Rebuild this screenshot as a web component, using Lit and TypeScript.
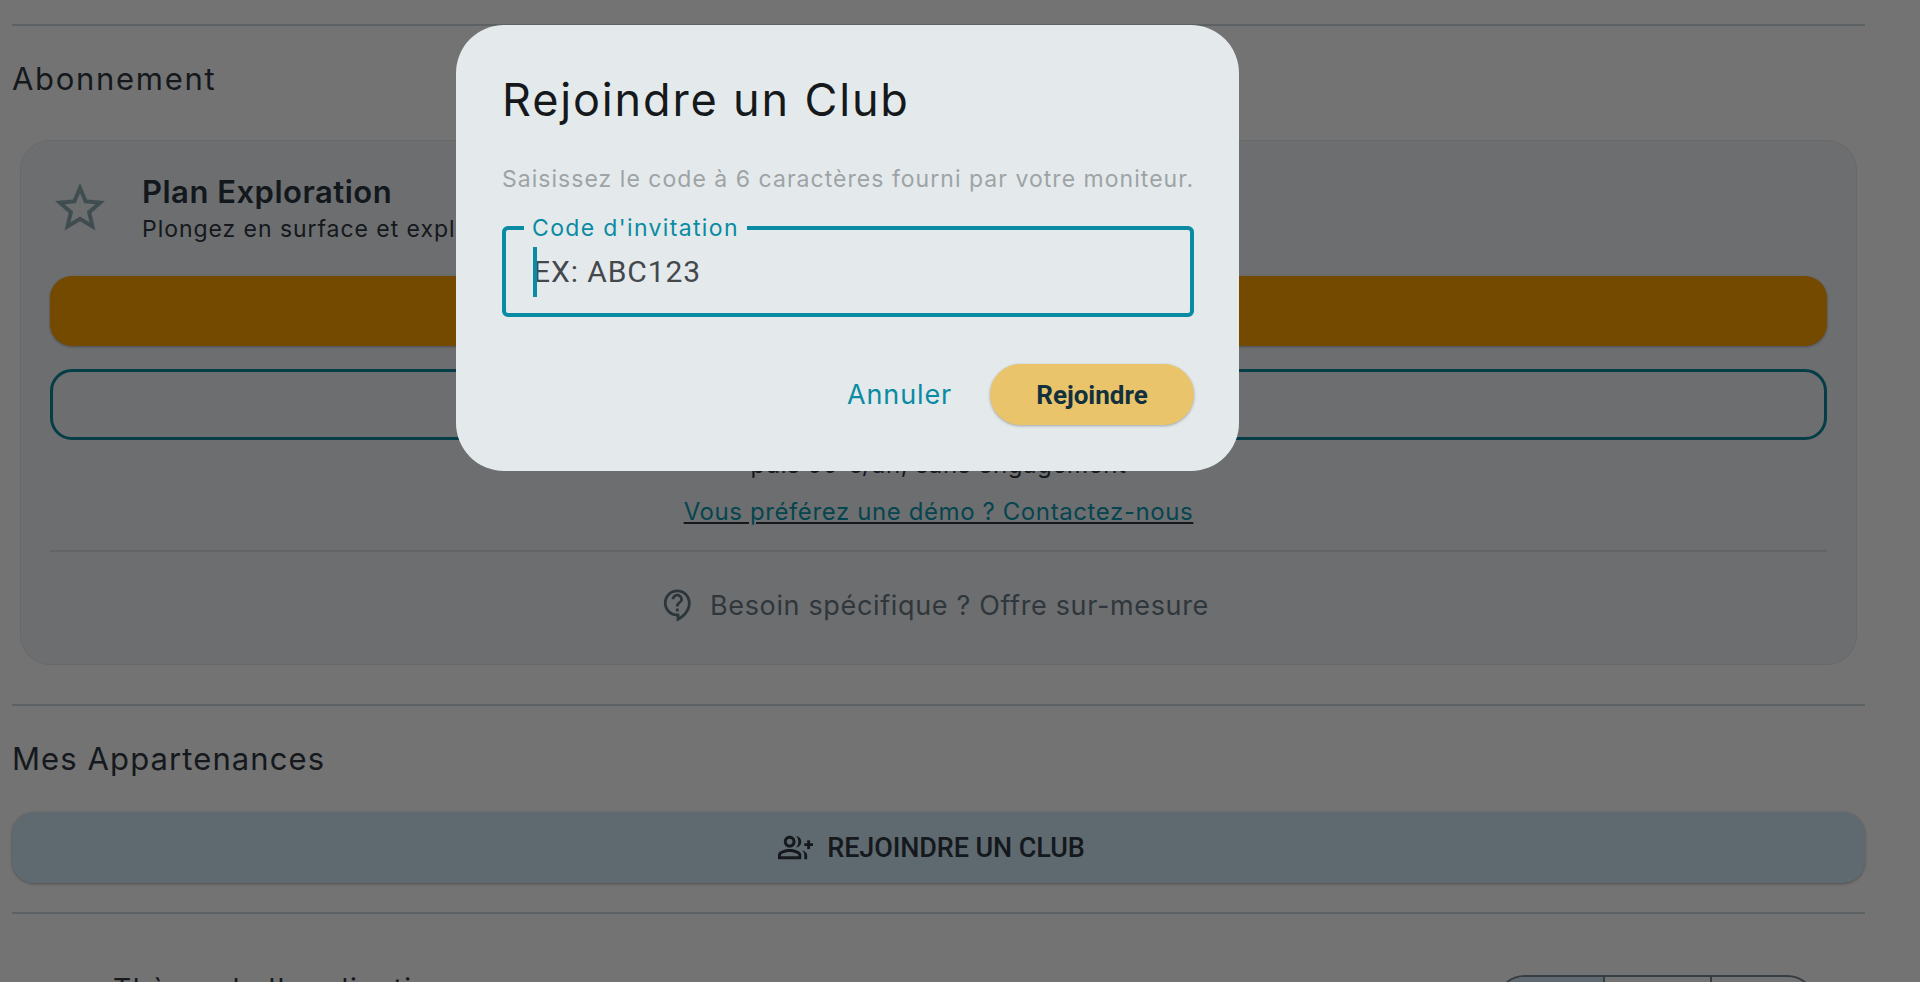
import { LitElement, html, css } from "lit";
import { customElement } from "lit/decorators.js";

@customElement("app-root")
export class AppRoot extends LitElement {
  static styles = css`
    :host { display: block; position: relative; height: 982px; overflow: hidden; background: #e6e6e6; font-family: Inter, "Liberation Sans", sans-serif; color: #2b333a; }
    * { box-sizing: border-box; }
    .page { padding: 24px 55px 0 12px; }
    .rule { height: 2px; background: #b9c3c9; }
    h2 { margin: 0; font-weight: 400; font-size: 31px; line-height: 50px; }
    .h-abo { margin-top: 28px; margin-bottom: 36px; letter-spacing: 1.7px; }
    .h-mes { margin-top: 28px; margin-bottom: 28px; letter-spacing: 1.1px; }
    .card { margin: 0 8px; height: 525px; border: 1px solid #cfd1d3; border-radius: 30px; background: #dbdde0; padding: 0 29px; display: flex; flex-direction: column; }
    .head { display: flex; align-items: flex-start; height: 135px; padding-top: 37px; }
    .star { width: 60px; height: 60px; fill: #7f9ba3; flex: none; }
    .head-text { margin-left: 32px; padding-top: 1px; }
    .title { font-size: 31px; font-weight: 600; line-height: 36px; margin-top: -5px; letter-spacing: 0.5px; color: #26303a; }
    .sub { font-size: 23px; line-height: 32px; margin-top: 3px; letter-spacing: .95px; white-space: nowrap; }
    .btn-orange { height: 70px; border-radius: 22px; background: #e89400; box-shadow: 0 1px 3px rgba(0,0,0,.3); flex: none; }
    .btn-outline { height: 71px; margin-top: 23px; border-radius: 22px; border: 3px solid #0b7a8e; flex: none; }
    .price { text-align: center; font-size: 24px; line-height: 32px; margin-top: 9px; letter-spacing: .6px; }
    .link { text-align: center; font-size: 24px; line-height: 32px; margin-top: 15px; color: #0b8b9f; letter-spacing: .6px; text-decoration: underline; text-decoration-color: #2b333a; }
    .inner-rule { height: 2px; background: #c5c9cc; margin-top: 22px; flex: none; }
    .need { display: flex; align-items: center; justify-content: center; gap: 15px; height: 106px; padding-right: 7px; font-size: 27px; letter-spacing: .65px; color: #5f6e78; }
    .need svg { width: 34px; height: 34px; fill: #566a74; flex: none; }
    .gap-1 { height: 39px; }
    .btn-join { height: 71px; border-radius: 22px; background: #bcd4e0; box-shadow: 0 1px 3px rgba(0,0,0,.3); display: flex; align-items: center; justify-content: center; gap: 14px; padding-right: 14px; font-family: Roboto, sans-serif; font-weight: 500; font-size: 27px; letter-spacing: -.1px; color: #2b333a; }
    .btn-join svg { width: 35px; height: 35px; fill: #2b333a; }
    .rule-b { margin-top: 29px; }
    .theme { display: flex; justify-content: space-between; padding: 61px 48px 0 101px; }
    .theme-label { font-size: 28px; line-height: 36px; letter-spacing: 1.6px; margin-top: -4px; }
    .seg { display: flex; width: 322px; height: 60px; border: 2px solid #6b7b85; border-radius: 30px; overflow: hidden; flex: none; }
    .seg span { flex: 1; border-left: 2px solid #6b7b85; }
    .seg span:first-child { border-left: 0; background: #bcd4e0; flex: 0 0 106px; }
    .seg span:nth-child(2) { flex: 0 0 107px; }
    .overlay { position: absolute; inset: 0; background: rgba(0,0,0,.5); }
    .dialog { position: absolute; left: 456px; top: 25px; width: 783px; height: 446px; background: #e4eaec; border-radius: 48px; padding: 0 45px 0 47px; color: #15191c; }
    .dialog h1 { margin: 45px 0 0 -1px; font-weight: 400; font-size: 45px; line-height: 60px; letter-spacing: 1.85px; white-space: nowrap; }
    .desc { margin: 33px 0 0 -1px; font-size: 23px; line-height: 32px; color: #9ea3a6; letter-spacing: 1.03px; white-space: nowrap; }
    .field { position: relative; margin: 31px 0 0 -1px; height: 91px; border: 4px solid #0a8ba3; border-radius: 6px; padding-left: 27px; display: flex; align-items: center; }
    .legend { position: absolute; left: 18px; top: -16px; padding: 0 8px; background: #e4eaec; font-size: 23px; line-height: 28px; color: #0a8ba3; letter-spacing: 1.35px; white-space: nowrap; }
    .caret { position: absolute; left: 27px; top: 17px; width: 4px; height: 50px; background: #0a8ba3; }
    .ph { font-family: Roboto, sans-serif; font-size: 30px; letter-spacing: .9px; color: #44484c; }
    .actions { display: flex; justify-content: flex-end; align-items: center; margin-top: 47px; gap: 38px; }
    .cancel { font-size: 27px; color: #0a8ba3; letter-spacing: .85px; }
    .confirm { width: 204px; height: 61px; border-radius: 31px; background: #e9c46a; color: #12303e; font-family: Roboto, sans-serif; font-weight: 700; font-size: 26px; display: flex; align-items: center; justify-content: center; box-shadow: 0 1px 3px rgba(0,0,0,.3); }
  `;

  render() {
    return html`
      <div class="page">
        <div class="rule"></div>
        <h2 class="h-abo">Abonnement</h2>
        <div class="card">
          <div class="head">
            <svg class="star" viewBox="0 0 24 24"><path d="M22 9.24l-7.19-.62L12 2 9.19 8.63 2 9.24l5.46 4.73L5.82 21 12 17.27 18.18 21l-1.63-7.03L22 9.24zM12 15.4l-3.76 2.27 1-4.28-3.32-2.88 4.38-.38L12 6.1l1.71 4.01 4.38.38-3.32 2.88 1 4.28L12 15.4z"/></svg>
            <div class="head-text">
              <div class="title">Plan Exploration</div>
              <div class="sub">Plongez en surface et explorez les fonctionnalités essentielles</div>
            </div>
          </div>
          <div class="btn-orange"></div>
          <div class="btn-outline"></div>
          <div class="price">puis 99 €/an, sans engagement</div>
          <div class="link">Vous préférez une démo ? Contactez-nous</div>
          <div class="inner-rule"></div>
          <div class="need">
            <svg viewBox="0 0 24 24"><path d="M11 23.59v-3.6c-5.01-.26-9-4.42-9-9.49C2 5.26 6.26 1 11.5 1S21 5.26 21 10.5c0 4.95-3.44 9.93-8.57 12.4l-1.43.69zM11.5 3C7.36 3 4 6.36 4 10.5S7.36 18 11.5 18H13v2.3c3.64-2.3 6-6.08 6-9.8C19 6.36 15.64 3 11.5 3zm-1 11.5h2v2h-2zm2-1.5h-2c0-3.25 3-3 3-5 0-1.1-.9-2-2-2s-2 .9-2 2h-2c0-2.21 1.79-4 4-4s4 1.79 4 4c0 2.5-3 2.75-3 5z"/></svg>
            <span>Besoin spécifique ? Offre sur-mesure</span>
          </div>
        </div>
        <div class="gap-1"></div>
        <div class="rule"></div>
        <h2 class="h-mes">Mes Appartenances</h2>
        <div class="btn-join">
          <svg viewBox="0 0 24 24"><path d="M22 9V7h-2v2h-2v2h2v2h2v-2h2V9h-2zM8 12c2.21 0 4-1.79 4-4s-1.79-4-4-4-4 1.79-4 4 1.79 4 4 4zm0-6c1.1 0 2 .9 2 2s-.9 2-2 2-2-.9-2-2 .9-2 2-2zm0 7c-2.67 0-8 1.34-8 4v3h16v-3c0-2.66-5.33-4-8-4zm6 5H2v-.99C2.2 16.29 5.3 15 8 15s5.8 1.29 6 2v1zM12.51 4.05C13.43 5.11 14 6.49 14 8s-.57 2.89-1.49 3.95C14.47 11.7 16 10.04 16 8s-1.53-3.7-3.49-3.95zM16.53 13.83c.89.83 1.47 1.87 1.47 3.17v3h2v-3c0-1.45-1.59-2.51-3.47-3.17z"/></svg>
          <span>REJOINDRE UN CLUB</span>
        </div>
        <div class="rule rule-b"></div>
        <div class="theme">
          <div class="theme-label">Thème de l'application</div>
          <div class="seg"><span></span><span></span><span></span></div>
        </div>
      </div>
      <div class="overlay"></div>
      <div class="dialog">
        <h1>Rejoindre un Club</h1>
        <p class="desc">Saisissez le code à 6 caractères fourni par votre moniteur.</p>
        <div class="field">
          <span class="legend">Code d'invitation</span>
          <span class="caret"></span>
          <span class="ph">EX: ABC123</span>
        </div>
        <div class="actions">
          <span class="cancel">Annuler</span>
          <span class="confirm">Rejoindre</span>
        </div>
      </div>
    `;
  }
}
